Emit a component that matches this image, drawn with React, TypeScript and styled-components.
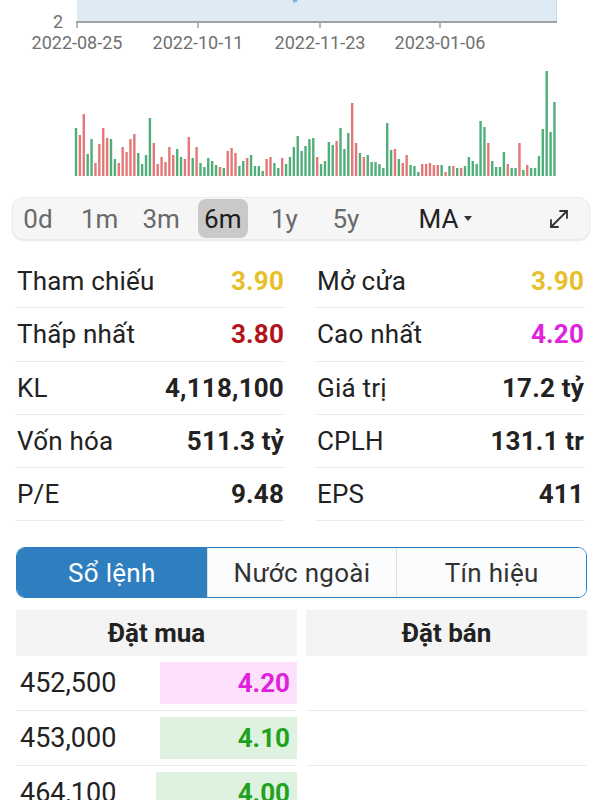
import styled, { createGlobalStyle } from 'styled-components';

const GlobalStyle = createGlobalStyle`
    body {
        margin: 0;
        background: #ffffff;
        font-family: Roboto, "Liberation Sans", sans-serif;
    }
`

const Screen = styled.div`
    width: 600px;
    height: 800px;
    overflow: hidden;
    background: #ffffff;
`

const ChartSvg = styled.svg`
    display: block;
`

const Toolbar = styled.div`
    display: flex;
    align-items: center;
    gap: 11.6px;
    box-sizing: border-box;
    width: 578px;
    height: 43px;
    margin: 17px 0 0 12px;
    background: #f6f6f6;
    border: 1px solid #ececec;
    border-radius: 12px;
    box-shadow: 0 1px 2px rgba(0, 0, 0, 0.1);
`

const Period = styled.div<{ $active?: boolean }>`
    display: flex;
    align-items: center;
    justify-content: center;
    width: 50px;
    height: 39px;
    border-radius: 8px;
    font-size: 26px;
    color: ${p => (p.$active ? '#1c1c1c' : '#6a6a6a')};
    background: ${p => (p.$active ? '#c9c9c9' : 'transparent')};
`

const MaSelect = styled.div`
    display: flex;
    align-items: center;
    margin-left: 36px;
    font-size: 26px;
    color: #222;
`

const Caret = styled.span`
    width: 0;
    height: 0;
    margin-left: 6px;
    border-left: 4.5px solid transparent;
    border-right: 4.5px solid transparent;
    border-top: 5px solid #333;
`

const ExpandButton = styled.div`
    display: flex;
    margin-left: auto;
    margin-right: 20px;
    color: #333;
`

const StatsGrid = styled.div`
    display: grid;
    grid-template-columns: 270px 270px;
    column-gap: 30px;
    margin: 15px 0 0 15px;
`

const StatRow = styled.div`
    display: flex;
    align-items: center;
    justify-content: space-between;
    box-sizing: border-box;
    height: 53.3px;
    padding: 0 1px 0 2px;
    border-bottom: 1px solid #ececec;
    font-size: 26px;
    letter-spacing: 0.2px;
`

const StatLabel = styled.span`
    color: #222;
`

const StatValue = styled.span<{ $color?: string }>`
    font-weight: 700;
    color: ${p => p.$color || '#222'};
`

const Tabs = styled.div`
    display: grid;
    grid-template-columns: repeat(3, 1fr);
    box-sizing: border-box;
    width: 571px;
    height: 51px;
    margin: 26px 0 0 16px;
    border: 1.5px solid #2f7ebf;
    border-radius: 9px;
    overflow: hidden;
`

const Tab = styled.div<{ $active?: boolean }>`
    display: flex;
    align-items: center;
    justify-content: center;
    font-size: 26px;
    letter-spacing: 0.3px;
    color: ${p => (p.$active ? '#ffffff' : '#333')};
    background: ${p => (p.$active ? '#2f7ebf' : '#fbfcfd')};
    & + & {
        border-left: 1px solid #dedede;
    }
`

const OrderBook = styled.div`
    display: grid;
    grid-template-columns: 281px 281px;
    column-gap: 9px;
    margin: 12px 0 0 16px;
`

const BookHeader = styled.div`
    display: flex;
    align-items: center;
    justify-content: center;
    height: 46px;
    background: #f4f4f4;
    font-size: 26px;
    font-weight: 700;
    color: #222;
`

const BookRow = styled.div`
    display: flex;
    align-items: center;
    justify-content: space-between;
    box-sizing: border-box;
    height: 55px;
    padding-left: 4px;
    border-bottom: 1px solid #ececec;
`

const Volume = styled.span`
    font-size: 27px;
    color: #222;
`

const PriceBar = styled.div<{ $tone: 'up' | 'ceil' }>`
    display: flex;
    align-items: center;
    justify-content: flex-end;
    box-sizing: border-box;
    height: 42px;
    padding-right: 7px;
    font-size: 26px;
    font-weight: 700;
    color: ${p => (p.$tone === 'ceil' ? '#e021dc' : '#1fa31f')};
    background: ${p => (p.$tone === 'ceil' ? '#fde0fb' : '#dff2df')};
`

const heights = [
    48, 41, 62, 22, 37, 13, 32, 48, 38, 37,
    17, 13, 29, 24, 37, 42, 23, 12, 21, 58,
    33, 12, 19, 14, 29, 21, 27, 19, 17, 39,
    18, 29, 13, 9, 18, 15, 11, 9, 8, 25,
    28, 23, 10, 15, 18, 21, 10, 10, 5, 17,
    19, 13, 8, 18, 12, 19, 29, 40, 25, 30,
    37, 38, 19, 12, 15, 34, 31, 35, 48, 27,
    43, 73, 33, 23, 19, 21, 14, 14, 12, 8,
    53, 26, 27, 17, 13, 21, 11, 10, 4, 12,
    12, 13, 11, 11, 11, 4, 10, 10, 8, 8,
    10, 19, 15, 12, 55, 49, 33, 15, 9, 9,
    24, 12, 8, 8, 33, 6, 11, 8, 8, 20,
    47, 105, 44, 74,
]

const colors =
    'grrggrrrrg' + 'grrrrrgggg' + 'rrrrrrggrr' + 'grgggggrgr' + 'rrggrggggr' +
    'rggrgggggg' + 'ggrggggrgg' + 'grrgrggggg' + 'ggrgrrgggr' + 'rrrrgrgrgr' +
    'ggggggrggg' + 'grggrgrggg' + 'gggg'

const ticks = [
    { x: 77, label: '2022-08-25' },
    { x: 198, label: '2022-10-11' },
    { x: 320, label: '2022-11-23' },
    { x: 440, label: '2023-01-06' },
]

const stats = [
    { label: 'Tham chiếu', value: '3.90', color: '#e6c02a' },
    { label: 'Mở cửa', value: '3.90', color: '#e6c02a' },
    { label: 'Thấp nhất', value: '3.80', color: '#b3141c' },
    { label: 'Cao nhất', value: '4.20', color: '#e123de' },
    { label: 'KL', value: '4,118,100' },
    { label: 'Giá trị', value: '17.2 tỷ' },
    { label: 'Vốn hóa', value: '511.3 tỷ' },
    { label: 'CPLH', value: '131.1 tr' },
    { label: 'P/E', value: '9.48' },
    { label: 'EPS', value: '411' },
]

const bids: { volume: string, price: string, tone: 'up' | 'ceil', width: number }[] = [
    { volume: '452,500', price: '4.20', tone: 'ceil', width: 137 },
    { volume: '453,000', price: '4.10', tone: 'up', width: 137 },
    { volume: '464,100', price: '4.00', tone: 'up', width: 141 },
]

const periods = ['0d', '1m', '3m', '6m', '1y', '5y']

const ExpandIcon = () => (
    <svg width="20" height="20" viewBox="0 0 20 20" fill="none" stroke="currentColor" strokeWidth="1.8" strokeLinecap="round" strokeLinejoin="round">
        <path d="M2 18 18 2" />
        <path d="M11 2h7v7" />
        <path d="M2 11v7h7" />
    </svg>
)

const App = () => {
    return (
        <Screen>
            <GlobalStyle />
            <ChartSvg width="600" height="60">
                <rect x="77" y="0" width="480" height="21" fill="#deebf5" />
                <line x1="556.5" y1="0" x2="556.5" y2="21" stroke="#c8dbe9" />
                <circle cx="295" cy="0" r="2.5" fill="#86b4d8" />
                <line x1="76" y1="22" x2="557" y2="22" stroke="#a2a2a2" strokeWidth="2" />
                <text x="63" y="28" textAnchor="end" fontFamily="Roboto" fontSize="18" fill="#707070">2</text>
                {ticks.map(t => (
                    <g key={t.x}>
                        <line x1={t.x} y1="22" x2={t.x} y2="28" stroke="#a2a2a2" strokeWidth="1.5" />
                        <text x={t.x} y="48.5" textAnchor="middle" fontFamily="Roboto" fontSize="18" fill="#707070">{t.label}</text>
                    </g>
                ))}
            </ChartSvg>
            <ChartSvg width="600" height="120">
                {heights.map((h, i) => (
                    <rect
                        key={i}
                        x={76 + i * 3.89 - 1.2}
                        y={116 - h}
                        width="2.4"
                        height={h}
                        fill={colors[i] === 'g' ? '#4fae7a' : '#e47777'}
                    />
                ))}
            </ChartSvg>
            <Toolbar>
                {periods.map(p => (
                    <Period key={p} $active={p === '6m'}>{p}</Period>
                ))}
                <MaSelect>
                    MA
                    <Caret />
                </MaSelect>
                <ExpandButton>
                    <ExpandIcon />
                </ExpandButton>
            </Toolbar>
            <StatsGrid>
                {stats.map(s => (
                    <StatRow key={s.label}>
                        <StatLabel>{s.label}</StatLabel>
                        <StatValue $color={s.color}>{s.value}</StatValue>
                    </StatRow>
                ))}
            </StatsGrid>
            <Tabs>
                <Tab $active>Sổ lệnh</Tab>
                <Tab>Nước ngoài</Tab>
                <Tab>Tín hiệu</Tab>
            </Tabs>
            <OrderBook>
                <div>
                    <BookHeader>Đặt mua</BookHeader>
                    {bids.map(b => (
                        <BookRow key={b.volume}>
                            <Volume>{b.volume}</Volume>
                            <PriceBar $tone={b.tone} style={{ width: b.width }}>{b.price}</PriceBar>
                        </BookRow>
                    ))}
                </div>
                <div>
                    <BookHeader>Đặt bán</BookHeader>
                    <BookRow />
                    <BookRow />
                    <BookRow />
                </div>
            </OrderBook>
        </Screen>
    );
}

export default App;
